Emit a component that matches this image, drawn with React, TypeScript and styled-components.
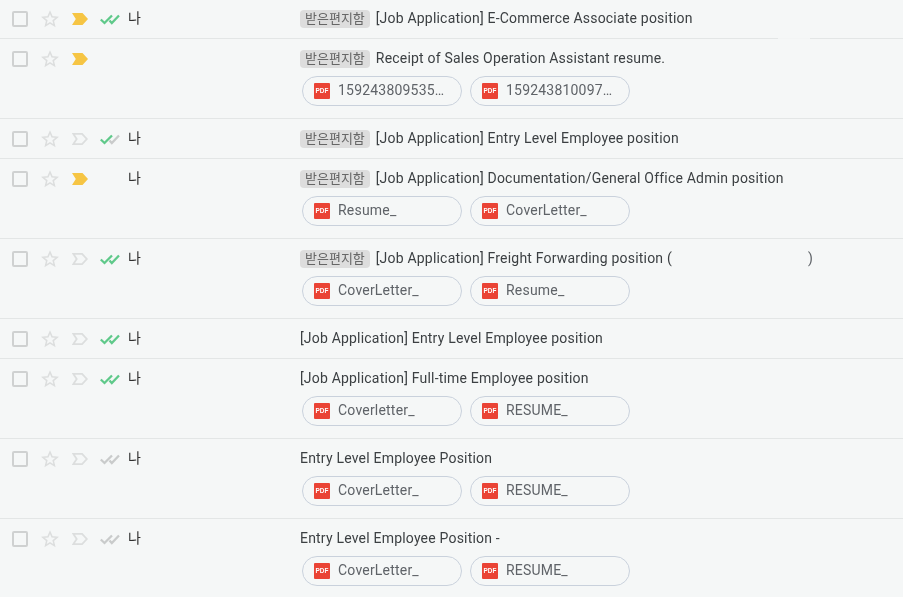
import React from "react";
import styled, { createGlobalStyle } from "styled-components";

type Check = "both" | "half" | "grey" | "none";

interface Mail {
  important: boolean;
  checks: Check;
  sender?: boolean;
  inbox?: boolean;
  subject: string;
  tail?: string;
  files?: string[];
}

const mails: Mail[] = [
  { important: true, checks: "both", sender: true, inbox: true, subject: "[Job Application] E-Commerce Associate position" },
  { important: true, checks: "none", inbox: true, subject: "Receipt of Sales Operation Assistant resume.", files: ["159243809535…", "159243810097…"] },
  { important: false, checks: "half", sender: true, inbox: true, subject: "[Job Application] Entry Level Employee position" },
  { important: true, checks: "none", sender: true, inbox: true, subject: "[Job Application] Documentation/General Office Admin position", files: ["Resume_", "CoverLetter_"] },
  { important: false, checks: "both", sender: true, inbox: true, subject: "[Job Application] Freight Forwarding position (", tail: ")", files: ["CoverLetter_", "Resume_"] },
  { important: false, checks: "both", sender: true, subject: "[Job Application] Entry Level Employee position" },
  { important: false, checks: "both", sender: true, subject: "[Job Application] Full-time Employee position", files: ["Coverletter_", "RESUME_"] },
  { important: false, checks: "grey", sender: true, subject: "Entry Level Employee Position", files: ["CoverLetter_", "RESUME_"] },
  { important: false, checks: "grey", sender: true, subject: "Entry Level Employee Position -", files: ["CoverLetter_", "RESUME_"] },
];

const GREEN = "#5fc98a";
const GREY = "#c9cbcb";

const Star = () => (
  <svg width="20" height="20" viewBox="0 0 20 20" fill="none">
    <path
      d="M10 2.300l2.250 5.250 5.650.5-4.300 3.700 1.300 5.550L10 14.400l-4.900 2.900 1.300-5.550-4.300-3.700 5.650-.5z"
      stroke="#dcdede"
      strokeWidth="1.700"
    />
  </svg>
);

const Marker = ({ on }: { on: boolean }) => (
  <svg width="16" height="12" viewBox="0 0 16 12">
    {on ? (
      <path d="M0 0h10.500L16 6l-5.500 6H0l3.800-6z" fill="#f6c544" />
    ) : (
      <path d="M1.400 .9h8.700L14.800 6l-4.700 5.100H1.400L4.700 6z" fill="none" stroke="#dcdede" strokeWidth="1.800" />
    )}
  </svg>
);

const Checks = ({ kind }: { kind: Check }) => {
  if (kind === "none") return null;
  const first = kind === "grey" ? GREY : GREEN;
  const second = kind === "both" ? GREEN : GREY;
  return (
    <svg width="20" height="12" viewBox="0 0 20 12" fill="none">
      <path d="M9.500 7.500l2.300 2.500L19 2.500" stroke={second} strokeWidth="2.300" />
      <path d="M.8 6.500l3.700 3.500L12 2.500" stroke={first} strokeWidth="2.300" />
    </svg>
  );
};

const PdfIcon = () => (
  <PdfBox>
    <PdfText>PDF</PdfText>
  </PdfBox>
);

export default function App() {
  return (
    <>
      <GlobalStyle />
      <List>
        {mails.map((mail, i) => (
          <Row key={i} $first={i === 0} $tall={!!mail.files}>
            <Top>
              <Checkbox />
              <IconCell $width={18} $ml={13}>
                <Star />
              </IconCell>
              <IconCell $width={16} $ml={13}>
                <Marker on={mail.important} />
              </IconCell>
              <IconCell $width={20} $ml={12}>
                <Checks kind={mail.checks} />
              </IconCell>
              <Sender>{mail.sender ? "나" : ""}</Sender>
              <Subject>
                {mail.inbox && <Label>받은편지함</Label>}
                <SubjectText>{mail.subject}</SubjectText>
                {mail.tail && <Tail>{mail.tail}</Tail>}
              </Subject>
            </Top>
            {mail.files && (
              <Chips>
                {mail.files.map((name, j) => (
                  <Chip key={j}>
                    <PdfIcon />
                    <ChipName>{name}</ChipName>
                  </Chip>
                ))}
              </Chips>
            )}
          </Row>
        ))}
      </List>
    </>
  );
}

const GlobalStyle = createGlobalStyle`
  html, body {
    margin: 0;
    padding: 0;
    height: 100%;
    overflow: hidden;
    background: #f5f7f7;
  }
  body {
    font-family: Roboto, "Noto Sans CJK KR", sans-serif;
  }
`;

const List = styled.div`
  display: flex;
  flex-direction: column;
  will-change: transform;
`;

const Row = styled.div<{ $first: boolean; $tall: boolean }>`
  box-sizing: border-box;
  position: relative;
  height: ${(p) => (p.$tall ? 80 : p.$first ? 39 : 40)}px;
  padding: ${(p) => (p.$first ? 9 : 10)}px 0 0 12px;
  border-bottom: 1px solid #e3e6e6;

  /* blanked-out patch over the first divider */
  ${(p) =>
    p.$first &&
    `
    &::after {
      content: "";
      position: absolute;
      left: 778px;
      bottom: -1px;
      width: 32px;
      height: 1px;
      background: #f3f5f5;
    }
  `}
`;

const Top = styled.div`
  display: flex;
  align-items: center;
  height: 20px;
`;

const Checkbox = styled.div`
  box-sizing: border-box;
  width: 16px;
  height: 16px;
  border: 2px solid #cfd1d1;
  border-radius: 2px;
  flex-shrink: 0;
`;

const IconCell = styled.div<{ $width: number; $ml: number }>`
  width: ${(p) => p.$width}px;
  margin-left: ${(p) => p.$ml}px;
  display: flex;
  align-items: center;
  justify-content: center;
  flex-shrink: 0;
`;

const Sender = styled.div`
  width: 172px;
  margin-left: 8px;
  flex-shrink: 0;
  margin-top: -3px;
  font-size: 14px;
  line-height: 20px;
  color: #303030;
`;

const Subject = styled.div`
  display: flex;
  align-items: center;
  min-width: 0;
`;

const Label = styled.span`
  height: 18px;
  padding: 0 5px;
  margin-right: 6px;
  border-radius: 4px;
  background: #dddddd;
  color: #666666;
  font-size: 13px;
  line-height: 17px;
  white-space: nowrap;
`;

const SubjectText = styled.span`
  margin-top: -2px;
  font-size: 14px;
  letter-spacing: 0.2px;
  line-height: 20px;
  color: #3c4043;
  white-space: nowrap;
`;

const Tail = styled(SubjectText)`
  margin-left: 136px;
  color: #5f6368;
`;

const Chips = styled.div`
  display: flex;
  gap: 8px;
  margin: 7px 0 0 290px;
`;

const Chip = styled.div`
  box-sizing: border-box;
  width: 160px;
  height: 30px;
  display: flex;
  align-items: center;
  padding: 0 11px;
  border: 1px solid #c9d1dc;
  border-radius: 15px;
`;

const PdfBox = styled.div`
  width: 16px;
  height: 16px;
  flex-shrink: 0;
  border-radius: 1px;
  background: #ea4335;
  display: flex;
  align-items: center;
  justify-content: center;
`;

const PdfText = styled.span`
  display: inline-block;
  transform: scaleX(0.8);
  font-family: "Liberation Sans", sans-serif;
  font-size: 8px;
  font-weight: 700;
  line-height: 16px;
  color: #ffffff;
`;

const ChipName = styled.span`
  margin: -2px 0 0 8px;
  font-size: 14px;
  letter-spacing: 0.2px;
  color: #5f6368;
  white-space: nowrap;
`;
